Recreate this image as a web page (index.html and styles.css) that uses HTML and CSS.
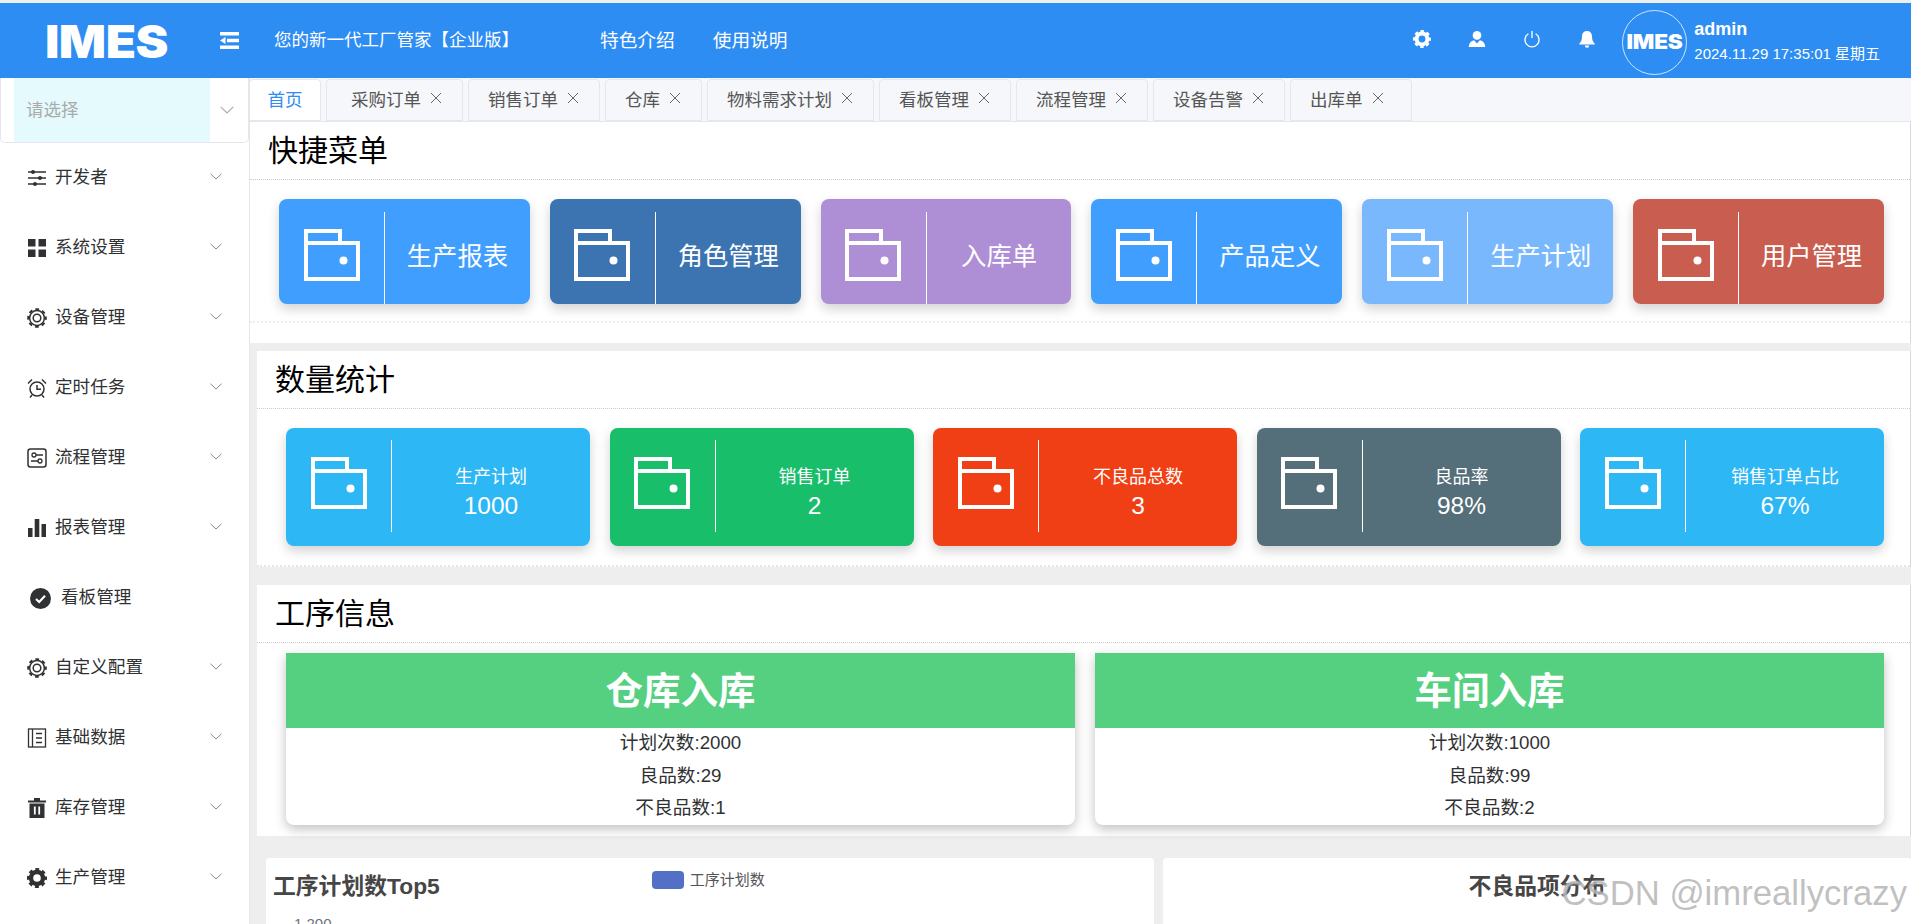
FILE: index.html
```html
<!DOCTYPE html>
<html lang="zh-CN">
<head>
<meta charset="utf-8">
<title>IMES</title>
<link rel="stylesheet" href="styles.css">
</head>
<body>
<svg class="defs" width="0" height="0" aria-hidden="true">
  <symbol id="i-folder" viewBox="0 0 56 52">
    <path d="M2 2H36V14H54V50H2Z M2 14H36" fill="none" stroke="currentColor" stroke-width="4"/>
    <circle cx="39.500" cy="31.500" r="4" fill="currentColor"/>
  </symbol>
  <symbol id="i-chev" viewBox="0 0 12 7">
    <path d="M.5 .8 6 6 11.500 .8" fill="none" stroke="currentColor" stroke-width="1"/>
  </symbol>
  <symbol id="i-close" viewBox="0 0 12 12">
    <path d="M1 1 11 11M11 1 1 11" fill="none" stroke="currentColor" stroke-width="1"/>
  </symbol>
  <symbol id="i-gear-o" viewBox="0 0 20 20">
    <circle cx="10" cy="10" r="3.800" fill="none" stroke="currentColor" stroke-width="1.500"/>
    <circle cx="10" cy="10" r="7.400" fill="none" stroke="currentColor" stroke-width="1.500"/>
    <circle cx="10" cy="10" r="8.900" fill="none" stroke="currentColor" stroke-width="1.800" stroke-dasharray="3.800 3.190" stroke-dashoffset="1.900"/>
  </symbol>
  <symbol id="i-gear-f" viewBox="0 0 20 20">
    <circle cx="10" cy="10" r="6" fill="none" stroke="currentColor" stroke-width="4.400"/>
    <circle cx="10" cy="10" r="8.600" fill="none" stroke="currentColor" stroke-width="2.800" stroke-dasharray="3.800 2.950" stroke-dashoffset="1.900"/>
  </symbol>
</svg>

<header class="topbar">
  <div class="brand"><span class="logo">IMES</span></div>
  <svg class="toggle" viewBox="0 0 19 17" width="19" height="17">
    <path d="M0 0h19v3.500H0Z M0 13.500h19V17H0Z M7 6.700h12v3.500H7Z" fill="#fff"/>
    <path d="M0 8.500 5.500 5v7Z" fill="#fff"/>
  </svg>
  <span class="slogan">您的新一代工厂管家【企业版】</span>
  <nav class="topnav">
    <a class="topnav-link">特色介绍</a>
    <a class="topnav-link">使用说明</a>
  </nav>
  <div class="top-right">
    <div class="top-icons">
      <svg class="top-icon" viewBox="0 0 20 20"><use href="#i-gear-f"/></svg>
      <svg class="top-icon" viewBox="0 0 20 20"><circle cx="10" cy="6" r="4.800" fill="#fff"/><path d="M.8 19c.3-4.800 3-7 6-7.600L10 15l3.200-3.600c3 .6 5.700 2.800 6 7.600Z" fill="#fff"/></svg>
      <svg class="top-icon" viewBox="0 0 20 20"><path d="M6 4.200a7.800 7.800 0 1 0 8 0" fill="none" stroke="#fff" stroke-width="1.500"/><path d="M10 1v8" stroke="#fff" stroke-width="1.500"/></svg>
      <svg class="top-icon" viewBox="0 0 20 20"><path d="M10 1c3.800 0 5.600 3 5.600 6.500 0 3.500 1 5.500 2.900 7.500v1H1.500v-1c1.900-2 2.900-4 2.900-7.500C4.400 4 6.200 1 10 1Z" fill="#fff"/><path d="M7.500 17.300h5a2.500 2.500 0 0 1-5 0Z" fill="#fff"/></svg>
    </div>
    <div class="avatar"><span class="logo logo-small">IMES</span></div>
    <div class="user">
      <div class="user-name">admin</div>
      <div class="user-time">2024.11.29 17:35:01 星期五</div>
    </div>
  </div>
</header>

<div class="layout">
  <aside class="sidebar">
    <div class="picker">
      <div class="picker-input">请选择</div>
      <svg class="picker-chev"><use href="#i-chev"/></svg>
    </div>
    <ul class="menu">
      <li class="menu-item">
        <svg class="menu-icon" viewBox="0 0 20 20"><path d="M1 4h18M1 10h18M1 16h18" stroke="currentColor" stroke-width="1.400"/><circle cx="6" cy="4" r="2" fill="currentColor"/><circle cx="13" cy="10" r="2" fill="currentColor"/><circle cx="8" cy="16" r="2" fill="currentColor"/></svg>
        <span class="menu-text">开发者</span><svg class="chev"><use href="#i-chev"/></svg>
      </li>
      <li class="menu-item">
        <svg class="menu-icon" viewBox="0 0 20 20"><path d="M1 1h7.500v7.500H1Z M11.500 1H19v7.500h-7.500Z M1 11.500h7.500V19H1Z M11.500 11.500H19V19h-7.500Z" fill="currentColor"/></svg>
        <span class="menu-text">系统设置</span><svg class="chev"><use href="#i-chev"/></svg>
      </li>
      <li class="menu-item">
        <svg class="menu-icon" viewBox="0 0 20 20"><use href="#i-gear-o"/></svg>
        <span class="menu-text">设备管理</span><svg class="chev"><use href="#i-chev"/></svg>
      </li>
      <li class="menu-item">
        <svg class="menu-icon" viewBox="0 0 20 20"><circle cx="10" cy="11" r="7" fill="none" stroke="currentColor" stroke-width="1.500"/><path d="M10 7v4.300h4" fill="none" stroke="currentColor" stroke-width="1.500"/><path d="M1 5.500 5 1.500M19 5.500 15 1.500M5 17l-2 2.500M15 17l2 2.500" stroke="currentColor" stroke-width="1.500"/></svg>
        <span class="menu-text">定时任务</span><svg class="chev"><use href="#i-chev"/></svg>
      </li>
      <li class="menu-item">
        <svg class="menu-icon" viewBox="0 0 20 20"><rect x="1" y="1" width="18" height="18" rx="2.500" fill="none" stroke="currentColor" stroke-width="1.500"/><circle cx="7" cy="7" r="2" fill="none" stroke="currentColor" stroke-width="1.300"/><circle cx="13" cy="13" r="2" fill="none" stroke="currentColor" stroke-width="1.300"/><path d="M9 7h7M4 13h7" stroke="currentColor" stroke-width="1.300"/></svg>
        <span class="menu-text">流程管理</span><svg class="chev"><use href="#i-chev"/></svg>
      </li>
      <li class="menu-item">
        <svg class="menu-icon" viewBox="0 0 20 20"><path d="M1 10h4.500v9H1Z M7.700 1h4.600v18H7.700Z M14.500 6H19v13h-4.500Z" fill="currentColor"/></svg>
        <span class="menu-text">报表管理</span><svg class="chev"><use href="#i-chev"/></svg>
      </li>
      <li class="menu-item menu-item-leaf">
        <svg class="menu-icon menu-icon-leaf" viewBox="0 0 21 21"><circle cx="10.500" cy="10.500" r="10.500" fill="currentColor"/><path d="M6 11l3.200 3 5.800-6.200" fill="none" stroke="#fff" stroke-width="2.200"/></svg>
        <span class="menu-text">看板管理</span>
      </li>
      <li class="menu-item">
        <svg class="menu-icon" viewBox="0 0 20 20"><use href="#i-gear-o"/></svg>
        <span class="menu-text">自定义配置</span><svg class="chev"><use href="#i-chev"/></svg>
      </li>
      <li class="menu-item">
        <svg class="menu-icon" viewBox="0 0 20 20"><rect x="1.500" y="1" width="17" height="18" fill="none" stroke="currentColor" stroke-width="1.300"/><path d="M5.500 1v18M9 5.500h6M9 10h6M9 14.500h6" stroke="currentColor" stroke-width="1.300"/></svg>
        <span class="menu-text">基础数据</span><svg class="chev"><use href="#i-chev"/></svg>
      </li>
      <li class="menu-item">
        <svg class="menu-icon" viewBox="0 0 20 20"><path d="M7 0h6v2.500h6v2H1v-2h6Z M2.500 5.500h15V20h-15Z" fill="currentColor"/><path d="M7.800 8.500v8M12.200 8.500v8" stroke="#fff" stroke-width="1.800"/></svg>
        <span class="menu-text">库存管理</span><svg class="chev"><use href="#i-chev"/></svg>
      </li>
      <li class="menu-item">
        <svg class="menu-icon" viewBox="0 0 20 20"><use href="#i-gear-f"/></svg>
        <span class="menu-text">生产管理</span><svg class="chev"><use href="#i-chev"/></svg>
      </li>
    </ul>
  </aside>

  <main class="content">
    <div class="tabs">
      <div class="tab tab-active"><span class="tab-text">首页</span></div>
      <div class="tab tab-wide"><span class="tab-text">采购订单</span><svg class="tab-x"><use href="#i-close"/></svg></div>
      <div class="tab"><span class="tab-text">销售订单</span><svg class="tab-x"><use href="#i-close"/></svg></div>
      <div class="tab"><span class="tab-text">仓库</span><svg class="tab-x"><use href="#i-close"/></svg></div>
      <div class="tab"><span class="tab-text">物料需求计划</span><svg class="tab-x"><use href="#i-close"/></svg></div>
      <div class="tab"><span class="tab-text">看板管理</span><svg class="tab-x"><use href="#i-close"/></svg></div>
      <div class="tab"><span class="tab-text">流程管理</span><svg class="tab-x"><use href="#i-close"/></svg></div>
      <div class="tab"><span class="tab-text">设备告警</span><svg class="tab-x"><use href="#i-close"/></svg></div>
      <div class="tab tab-last"><span class="tab-text">出库单</span><svg class="tab-x"><use href="#i-close"/></svg></div>
    </div>

    <section class="panel panel-quick">
      <h2 class="panel-title">快捷菜单</h2>
      <div class="quick-row">
        <a class="tile tile-blue"><span class="tile-icon"><svg class="folder"><use href="#i-folder"/></svg></span><span class="tile-text">生产报表</span></a>
        <a class="tile tile-navy"><span class="tile-icon"><svg class="folder"><use href="#i-folder"/></svg></span><span class="tile-text">角色管理</span></a>
        <a class="tile tile-purple"><span class="tile-icon"><svg class="folder"><use href="#i-folder"/></svg></span><span class="tile-text">入库单</span></a>
        <a class="tile tile-blue"><span class="tile-icon"><svg class="folder"><use href="#i-folder"/></svg></span><span class="tile-text">产品定义</span></a>
        <a class="tile tile-sky"><span class="tile-icon"><svg class="folder"><use href="#i-folder"/></svg></span><span class="tile-text">生产计划</span></a>
        <a class="tile tile-brick"><span class="tile-icon"><svg class="folder"><use href="#i-folder"/></svg></span><span class="tile-text">用户管理</span></a>
      </div>
    </section>

    <section class="panel panel-stats">
      <h2 class="panel-title">数量统计</h2>
      <div class="stat-row">
        <div class="tile stat tile-cyan"><span class="tile-icon"><svg class="folder"><use href="#i-folder"/></svg></span><span class="stat-text"><span class="stat-label">生产计划</span><span class="stat-value">1000</span></span></div>
        <div class="tile stat tile-green"><span class="tile-icon"><svg class="folder"><use href="#i-folder"/></svg></span><span class="stat-text"><span class="stat-label">销售订单</span><span class="stat-value">2</span></span></div>
        <div class="tile stat tile-red"><span class="tile-icon"><svg class="folder"><use href="#i-folder"/></svg></span><span class="stat-text"><span class="stat-label">不良品总数</span><span class="stat-value">3</span></span></div>
        <div class="tile stat tile-slate"><span class="tile-icon"><svg class="folder"><use href="#i-folder"/></svg></span><span class="stat-text"><span class="stat-label">良品率</span><span class="stat-value">98%</span></span></div>
        <div class="tile stat tile-cyan"><span class="tile-icon"><svg class="folder"><use href="#i-folder"/></svg></span><span class="stat-text"><span class="stat-label">销售订单占比</span><span class="stat-value">67%</span></span></div>
      </div>
    </section>

    <section class="panel panel-proc">
      <h2 class="panel-title">工序信息</h2>
      <div class="proc-row">
        <div class="proc">
          <div class="proc-head">仓库入库</div>
          <div class="proc-body"><p>计划次数:2000</p><p>良品数:29</p><p>不良品数:1</p></div>
        </div>
        <div class="proc">
          <div class="proc-head">车间入库</div>
          <div class="proc-body"><p>计划次数:1000</p><p>良品数:99</p><p>不良品数:2</p></div>
        </div>
      </div>
    </section>

    <div class="charts">
      <div class="chart chart-left">
        <div class="chart-top">
          <h3 class="chart-title">工序计划数Top5</h3>
          <div class="legend"><span class="legend-swatch"></span>工序计划数</div>
        </div>
        <div class="axis-label">1,200</div>
      </div>
      <div class="chart chart-right">
        <h3 class="chart-title chart-title-center">不良品项分布</h3>
      </div>
    </div>
  </main>
</div>
<div class="watermark">CSDN @imreallycrazy</div>
</body>
</html>
```
FILE: styles.css
```css
* { box-sizing: border-box; }
html, body {
  margin: 0;
  height: 924px;
  overflow: hidden;
}
body {
  position: relative;
  background: #eeeeee;
  padding-top: 3px;
  color: #303133;
  font-family: "Liberation Sans", "Noto Sans CJK SC", sans-serif;
}
.defs { position: absolute; }
h2, h3, p, ul { margin: 0; padding: 0; }
ul { list-style: none; }

/* top bar */
.topbar {
  height: 75px;
  background: #2e8df2;
  color: #fff;
  display: flex;
  align-items: center;
}
.brand { width: 220px; padding-left: 45px; flex: none; margin-top: 2px; }
.logo {
  display: block;
  font-family: Inter, "Liberation Sans", sans-serif;
  font-weight: 900;
  font-size: 45px;
  line-height: 38px;
  letter-spacing: -.5px;
  color: #fff;
  transform: scaleX(1.1);
  transform-origin: left center;
}
.logo-small {
  font-size: 20.500px;
  line-height: 18px;
  letter-spacing: -.2px;
  transform-origin: center;
}
.toggle { flex: none; }
.slogan { font-size: 17.500px; margin: -5px 0 0 35px; width: 326px; flex: none; white-space: nowrap; }
.topnav { display: flex; gap: 38px; margin-top: -5px; }
.topnav-link { font-size: 18.700px; }
.top-right { margin-left: auto; display: flex; align-items: center; padding-right: 31px; }
.top-icons { display: flex; gap: 37px; margin-right: 26px; align-items: center; margin-top: -3px; }
.top-icon { width: 18px; height: 18px; color: #fff; }
.avatar {
  width: 65px;
  height: 65px;
  border: 1px solid rgba(255, 255, 255, .75);
  border-radius: 50%;
  display: flex;
  align-items: center;
  justify-content: center;
  margin-right: 7px;
  margin-top: 3px;
}
.user { margin-top: 2px; }
.user-name { font-size: 18px; font-weight: 700; line-height: 22px; margin-bottom: 3px; }
.user-time { font-size: 15px; line-height: 22px; }

/* layout */
.layout { display: flex; height: 846px; overflow: hidden; }
.sidebar {
  width: 250px;
  flex: none;
  background: #fff;
  border-right: 1px solid #e6e6e6;
}
.picker {
  height: 65px;
  display: flex;
  align-items: center;
  border: 1px solid #e4e7ed;
  border-top: 0;
  border-radius: 0 0 5px 5px;
}
.picker-input {
  margin-left: 13px;
  width: 196px;
  height: 100%;
  background: #e4fafd;
  color: #aaaaaa;
  font-size: 17.500px;
  padding-left: 12px;
  line-height: 64px;
}
.picker-chev { width: 14px; height: 8px; margin-left: 10px; color: #aaa; }
.menu-item {
  height: 70px;
  display: flex;
  align-items: center;
  padding: 0 27px;
  font-size: 17.600px;
  gap: 8px;
  color: #303133;
}
.menu-text { padding-bottom: 2px; line-height: 24px; }
.menu-item-leaf { padding-left: 30px; gap: 10px; }
.menu-icon { width: 20px; height: 20px; flex: none; color: #303133; }
.menu-icon-leaf { width: 21px; height: 21px; }
.chev { width: 12px; height: 7px; margin-left: auto; color: #888; margin-top: -4px; }

/* content */
.content { flex: 1; min-width: 0; height: 846px; overflow: hidden; }
.tabs {
  height: 44px;
  background: #f5f7fa;
  border-bottom: 1px solid #e4e7ed;
  display: flex;
  gap: 5px;
  padding-top: 1px;
  margin-left: -1px;
}
.tab {
  height: 42px;
  border: 1px solid #e4e7ed;
  border-radius: 4px 4px 0 0;
  padding: 0 20px 0 19px;
  display: flex;
  align-items: center;
  font-size: 17.500px;
  color: #555;
  white-space: nowrap;
}
.tab-text { line-height: 24px; }
.tab-active { color: #2e8df2; background: #fff; padding: 0 17.500px; }
.tab-wide { padding-left: 24px; }
.tab-last { padding-right: 27px; }
.tab-x { width: 12px; height: 12px; margin-left: 9px; margin-top: -5px; color: #666; flex: none; }

.panel { background: #fff; border-right: 1px solid #d8d8d8; }
.panel-title {
  font-weight: 400;
  font-size: 30px;
  line-height: 58px;
  height: 58px;
  color: #000;
  border-bottom: 1px dotted #ccc;
  padding-left: 18px;
}
.panel-quick { height: 221px; }
.panel-stats { height: 216px; margin: 8px 0 0 7px; }
.panel-proc { height: 251px; margin: 18px 0 0 7px; }

.quick-row, .stat-row, .proc-row { display: flex; padding: 0 26px 0 29px; }
.quick-row { gap: 20px; padding-top: 19px; padding-bottom: 18px; border-bottom: 2px dotted #eee; height: 143px; }
.stat-row { gap: 19.500px; padding-top: 19px; padding-bottom: 20px; height: 158px; border-bottom: 2px dotted #e6e6e6; }
.proc-row { gap: 20px; padding-top: 10px; }

.tile {
  flex: 1 1 0;
  min-width: 0;
  height: 105px;
  border-radius: 8px;
  color: #fff;
  display: flex;
  box-shadow: 0 5px 12px rgba(0, 0, 0, .18);
  padding-top: 13px;
}
.stat { height: 118px; padding-top: 12px; }
.tile-icon {
  width: 106px;
  height: 92px;
  flex: none;
  border-right: 1px solid #fff;
  display: flex;
  justify-content: center;
  padding-top: 17px;
}
.folder { width: 56px; height: 52px; color: #fff; }
.tile-text {
  flex: 1;
  text-align: center;
  font-size: 25.300px;
  line-height: 88px;
}
.stat-text {
  flex: 1;
  display: flex;
  flex-direction: column;
  align-items: center;
  padding-top: 23px;
}
.stat-label { font-size: 18px; line-height: 29px; }
.stat-value { font-size: 24.500px; line-height: 28px; }

.tile-blue { background: #409eff; }
.tile-navy { background: #3c74b1; }
.tile-purple { background: #ae8ed4; }
.tile-sky { background: #79b8fd; }
.tile-brick { background: #c95d50; }
.tile-cyan { background: #2db7f5; }
.tile-green { background: #19be6b; }
.tile-red { background: #f03f14; }
.tile-slate { background: #546e7a; }

.proc {
  flex: 1 1 0;
  height: 172px;
  border-radius: 0 0 8px 8px;
  background: #fff;
  box-shadow: 0 4px 12px rgba(0, 0, 0, .25);
}
.proc-head {
  height: 75px;
  background: #55d080;
  color: #fff;
  font-weight: 700;
  font-size: 37.500px;
  line-height: 77px;
  text-align: center;
}
.proc-body { text-align: center; font-size: 18.700px; line-height: 32.500px; color: #303133; margin-top: -1px; }

/* charts */
.charts { display: flex; gap: 9px; padding: 22px 0 0 16px; }
.chart { background: #fff; border-radius: 4px 4px 0 0; height: 66px; }
.chart-left { width: 888px; flex: none; padding: 13px 0 0 7px; }
.chart-right { flex: 1; padding-top: 13px; margin-right: -1px; }
.chart-top { display: flex; align-items: flex-start; }
.chart-title { font-size: 22.800px; line-height: 30px; font-weight: 700; color: #464646; }
.chart-title-center { text-align: center; width: 748px; }
.legend {
  margin-left: 212px;
  margin-top: -1px;
  display: flex;
  align-items: center;
  gap: 6px;
  font-size: 15px;
  line-height: 20px;
  color: #555;
}
.legend-swatch { width: 32px; height: 18px; border-radius: 4px; background: #5470c6; }
.axis-label { padding-left: 21px; margin-top: 14px; font-size: 15px; line-height: 18px; color: #6e7079; }

/* watermark over the page */
.watermark {
  position: absolute;
  right: 4px;
  top: 873px;
  font-size: 34.700px;
  line-height: 40px;
  color: rgba(130, 130, 130, .5);
  text-shadow: 0 0 2px rgba(255, 255, 255, .9);
  white-space: nowrap;
}
```
